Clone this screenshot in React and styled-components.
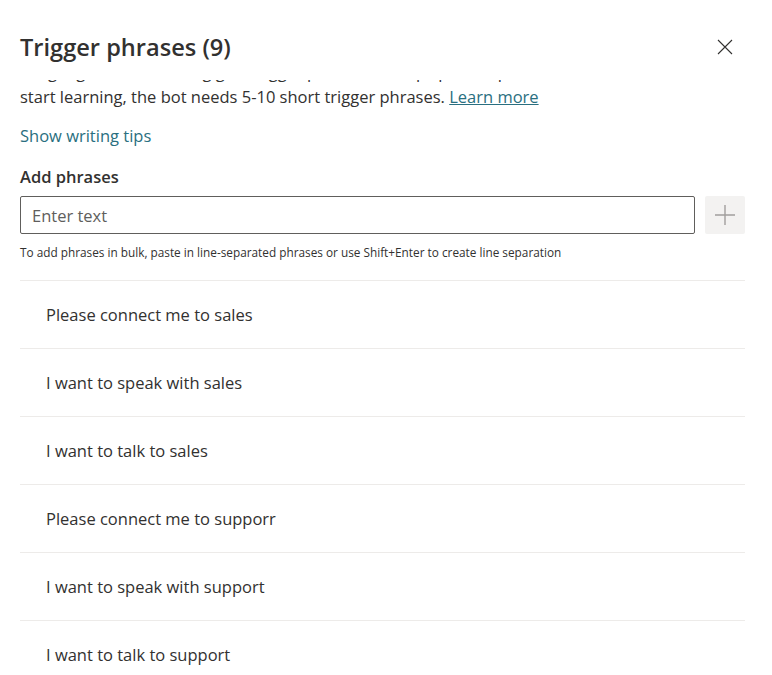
import { useLayoutEffect, useRef } from "react";
import styled, { createGlobalStyle } from "styled-components";

const phrases = [
  "Please connect me to sales",
  "I want to speak with sales",
  "I want to talk to sales",
  "Please connect me to supporr",
  "I want to speak with support",
  "I want to talk to support",
  "Connect me with someone",
  "Talk to a person",
  "I need help",
];

const App = () => {
  const bodyRef = useRef(null);

  // the panel is shown scrolled a little, so the intro line slides under the header
  useLayoutEffect(() => {
    if (bodyRef.current) bodyRef.current.scrollTop = 21;
  }, []);

  return (
    <>
      <GlobalStyle />
      <Panel>
        <Header>
          <Title>Trigger phrases (9)</Title>
          <CloseButton aria-label="Close">
            <svg width="16" height="16" viewBox="0 0 16 16">
              <path d="M1 1 L15 15 M15 1 L1 15" stroke="#323130" strokeWidth="1.1" fill="none" />
            </svg>
          </CloseButton>
        </Header>

        <Body ref={bodyRef}>
          <Intro>
            Language understanding gets trigger phrases to help spot a topic. To
            <br />
            start learning, the bot needs 5-10 short trigger phrases.{" "}
            <Link href="#">Learn more</Link>
          </Intro>

          <TipsLink>Show writing tips</TipsLink>

          <Label>Add phrases</Label>
          <InputRow>
            <TextInput placeholder="Enter text" />
            <AddButton aria-label="Add">
              <svg width="22" height="22" viewBox="0 0 22 22">
                <path d="M11 1 V21 M1 11 H21" stroke="#a19f9d" strokeWidth="1.4" fill="none" />
              </svg>
            </AddButton>
          </InputRow>
          <Hint>
            To add phrases in bulk, paste in line-separated phrases or use
            Shift+Enter to create line separation
          </Hint>

          <PhraseList>
            {phrases.map((phrase, index) => (
              <PhraseRow key={index}>{phrase}</PhraseRow>
            ))}
          </PhraseList>
        </Body>
      </Panel>
    </>
  );
};

export default App;

const GlobalStyle = createGlobalStyle`
  html, body {
    margin: 0;
    padding: 0;
    background: #fff;
  }
  body {
    font-family: "Open Sans", "Noto Sans", sans-serif;
    color: #323130;
  }
`;

const Panel = styled.div`
  width: 772px;
  height: 100vh;
  display: flex;
  flex-direction: column;
  background: #fff;
  overflow: hidden;
`;

const Header = styled.div`
  box-sizing: border-box;
  height: 80px;
  flex-shrink: 0;
  padding: 31px 31px 0 20px;
  display: flex;
  align-items: flex-start;
  justify-content: space-between;
  background: #fff;
`;

const Title = styled.h1`
  margin: 0;
  font-size: 23.6px;
  line-height: 32px;
  font-weight: 600;
  color: #323130;
`;

const CloseButton = styled.button`
  width: 32px;
  height: 32px;
  border: none;
  background: transparent;
  padding: 0;
  display: flex;
  align-items: center;
  justify-content: center;
  cursor: pointer;
`;

const Body = styled.div`
  flex: 1;
  overflow: hidden;
  padding: 0 27px 0 20px;
`;

const Intro = styled.p`
  margin: 0;
  font-size: 16.5px;
  line-height: 25px;
  color: #323130;
  white-space: nowrap;
`;

const Link = styled.a`
  color: #2a6f80;
  text-decoration: underline;
`;

const TipsLink = styled.div`
  margin-top: 15px;
  font-size: 16.5px;
  line-height: 24px;
  color: #2a6f80;
  cursor: pointer;
`;

const Label = styled.div`
  margin-top: 17px;
  font-size: 16.5px;
  line-height: 24px;
  font-weight: 600;
  color: #323130;
`;

const InputRow = styled.div`
  margin-top: 7px;
  display: flex;
  gap: 10px;
`;

const TextInput = styled.input`
  flex: 1;
  box-sizing: border-box;
  height: 38px;
  padding: 0 11px;
  border: 1px solid #605e5c;
  border-radius: 2px;
  font-family: inherit;
  font-size: 16.5px;
  color: #323130;
  outline: none;

  &::placeholder {
    color: #605e5c;
  }
`;

const AddButton = styled.button`
  width: 40px;
  height: 38px;
  border: none;
  border-radius: 2px;
  background: #f3f2f1;
  display: flex;
  align-items: center;
  justify-content: center;
  padding: 0;
`;

const Hint = styled.div`
  margin-top: 10px;
  font-size: 11.8px;
  line-height: 16px;
  color: #323130;
`;

const PhraseList = styled.div`
  margin-top: 20px;
`;

const PhraseRow = styled.div`
  box-sizing: border-box;
  height: 68px;
  border-top: 1px solid #edebe9;
  padding-left: 26px;
  display: flex;
  align-items: center;
  font-size: 16.5px;
  color: #323130;
`;
